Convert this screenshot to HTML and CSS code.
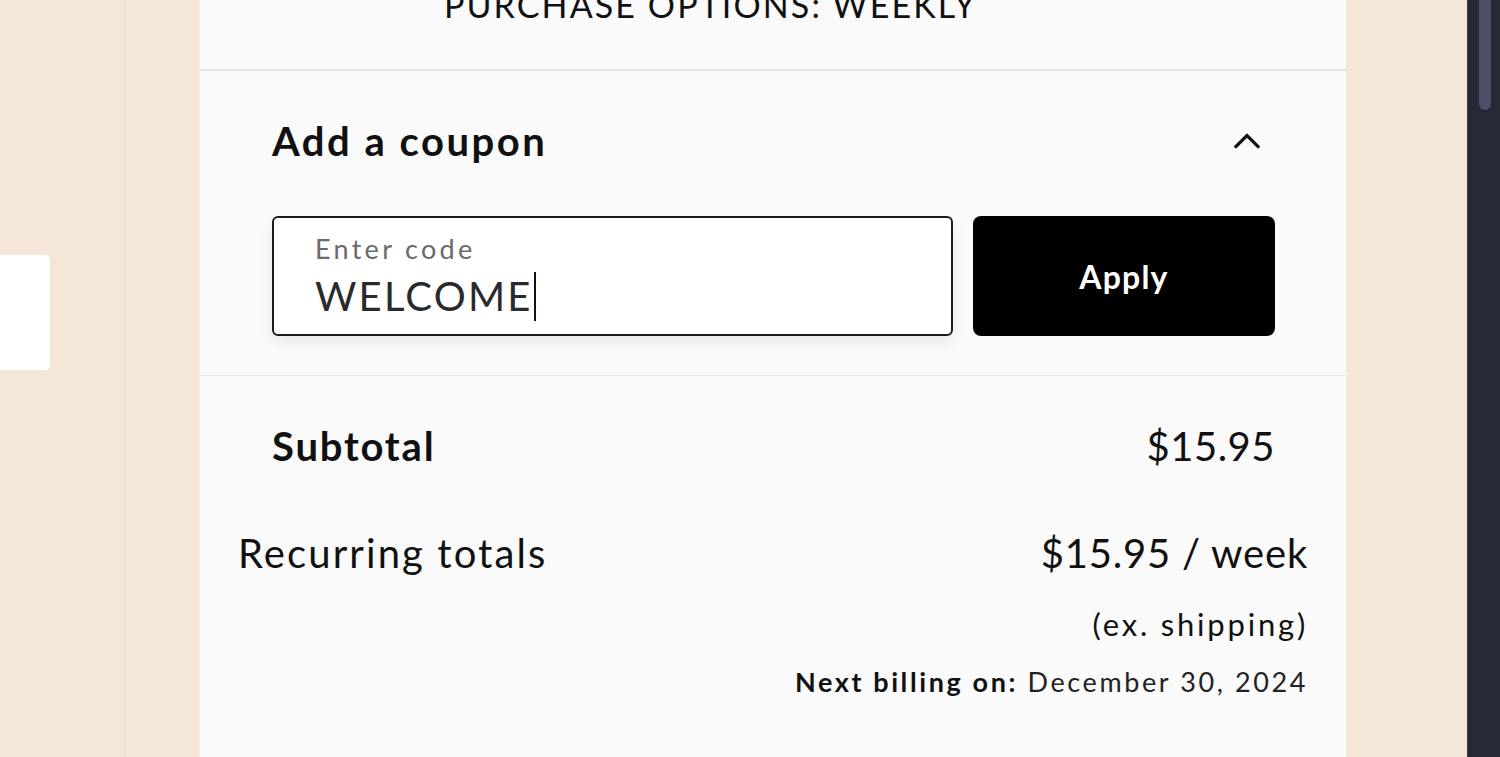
FILE: index.html
```html
<!DOCTYPE html>
<html lang="en">
<head>
<meta charset="utf-8">
<title>Cart summary</title>
<link rel="stylesheet" href="styles.css">
</head>
<body>
<div class="page">
  <aside class="left-rail">
    <div class="rail-col">
      <div class="rail-card"></div>
    </div>
  </aside>
  <main class="panel">
    <section class="options">
      <p class="options-text">PURCHASE OPTIONS: WEEKLY</p>
    </section>
    <section class="coupon">
      <div class="coupon-head">
        <h2 class="coupon-title">Add a coupon</h2>
        <svg class="chevron" width="28" height="17" viewBox="0 0 28 17" aria-hidden="true">
          <polyline points="3,14.5 14,3.5 25,14.5" fill="none" stroke="#111" stroke-width="3.2" stroke-linecap="square" stroke-linejoin="miter"/>
        </svg>
      </div>
      <div class="coupon-form">
        <label class="field">
          <span class="field-label">Enter code</span>
          <span class="field-value">WELCOME<span class="caret"></span></span>
        </label>
        <button class="apply" type="button">Apply</button>
      </div>
    </section>
    <section class="totals">
      <div class="subtotal-row">
        <span class="subtotal-label">Subtotal</span>
        <span class="subtotal-price">$15.95</span>
      </div>
      <div class="recurring">
        <div class="recurring-row">
          <span class="recurring-label">Recurring totals</span>
          <span class="recurring-price">$15.95 / week</span>
        </div>
        <div class="ex-shipping">(ex. shipping)</div>
        <div class="next-billing"><strong>Next billing on:</strong> December 30, 2024</div>
      </div>
    </section>
  </main>
  <div class="right-rail"></div>
  <div class="scrollbar"><div class="scroll-thumb"></div></div>
</div>
</body>
</html>
```
FILE: styles.css
```css
* { box-sizing: border-box; }
html, body {
  margin: 0;
  padding: 0;
  width: 1500px;
  height: 757px;
  overflow: hidden;
}
body {
  font-family: Lato, "Liberation Sans", sans-serif;
  color: #111;
  background: #f5e7d8;
}
.page {
  display: flex;
  width: 1500px;
  height: 757px;
}
.left-rail {
  width: 199px;
  flex: none;
  background: #f5e7d8;
}
.rail-col {
  width: 126px;
  height: 100%;
  border-right: 1px solid #ecdccb;
  padding-top: 255px;
}
.rail-card {
  width: 50px;
  height: 115px;
  background: #fff;
  border-radius: 0 5px 5px 0;
}
.panel {
  width: 1147px;
  flex: none;
  background: #fafafa;
  border-left: 1px solid #f0f0f0;
  display: flex;
  flex-direction: column;
}
.options {
  height: 71px;
  border-bottom: 2px solid #e6e6e6;
  padding-left: 244px;
  overflow: hidden;
}
.options-text {
  margin: -12px 0 0;
  font-size: 34px;
  line-height: 34px;
  letter-spacing: 2.1px;
  color: #111;
}
.coupon {
  padding: 39px 71px 39px 72px;
  border-bottom: 1px solid #e6e6e6;
}
.coupon-head {
  height: 62px;
  display: flex;
  align-items: center;
  justify-content: space-between;
}
.coupon-title {
  margin: 0;
  font-size: 40px;
  font-weight: 700;
  letter-spacing: 2.5px;
}
.chevron {
  margin-right: 14px;
  margin-top: -2px;
}
.coupon-form {
  margin-top: 44px;
  display: flex;
  gap: 20px;
  height: 120px;
}
.field {
  flex: 1;
  background: #fff;
  border: 2px solid #1c1c1c;
  border-radius: 6px;
  box-shadow: 0 6px 14px rgba(0, 0, 0, 0.08);
  padding: 14px 0 0 41px;
  display: flex;
  flex-direction: column;
}
.field-label {
  font-size: 27px;
  line-height: 34px;
  color: #6a6a6a;
  letter-spacing: 3.3px;
}
.field-value {
  margin-top: 5px;
  font-size: 40px;
  line-height: 50px;
  color: #2a2a2a;
  letter-spacing: 2.2px;
  display: flex;
  align-items: center;
}
.caret {
  width: 2px;
  height: 49px;
  background: #111;
  margin-left: 1px;
}
.apply {
  width: 302px;
  flex: none;
  border: 0;
  border-radius: 8px;
  background: #000;
  color: #fff;
  font-family: Lato, "Liberation Sans", sans-serif;
  font-size: 32px;
  font-weight: 700;
  letter-spacing: 1.2px;
  padding: 0;
}
.totals {
  flex: 1;
  padding-top: 45px;
}
.subtotal-row {
  display: flex;
  justify-content: space-between;
  padding: 0 71px 0 72px;
  font-size: 40px;
  line-height: 50px;
}
.subtotal-label {
  font-weight: 700;
  letter-spacing: 1.8px;
}
.subtotal-price {
  letter-spacing: 0.5px;
}
.recurring {
  padding: 0 38px 0 38px;
  margin-top: 57px;
  display: flex;
  flex-direction: column;
  align-items: flex-end;
}
.recurring-row {
  align-self: stretch;
  display: flex;
  justify-content: space-between;
  font-size: 40px;
  line-height: 50px;
}
.recurring-label { letter-spacing: 2.1px; }
.recurring-price { letter-spacing: 0.8px; }
.ex-shipping {
  margin-top: 28px;
  font-size: 31px;
  line-height: 36px;
  letter-spacing: 2.8px;
}
.next-billing {
  margin-top: 24px;
  font-size: 27px;
  line-height: 32px;
  letter-spacing: 2.6px;
  color: #222;
}
.next-billing strong { color: #111; }
.right-rail {
  flex: 1;
  background: #f5e7d8;
  border-right: 1px solid #3a3b46;
}
.scrollbar {
  width: 32px;
  flex: none;
  background: #272936;
  padding-left: 11px;
}
.scroll-thumb {
  width: 12px;
  height: 110px;
  background: #4b4f68;
  border-radius: 0 0 6px 6px;
}
```
